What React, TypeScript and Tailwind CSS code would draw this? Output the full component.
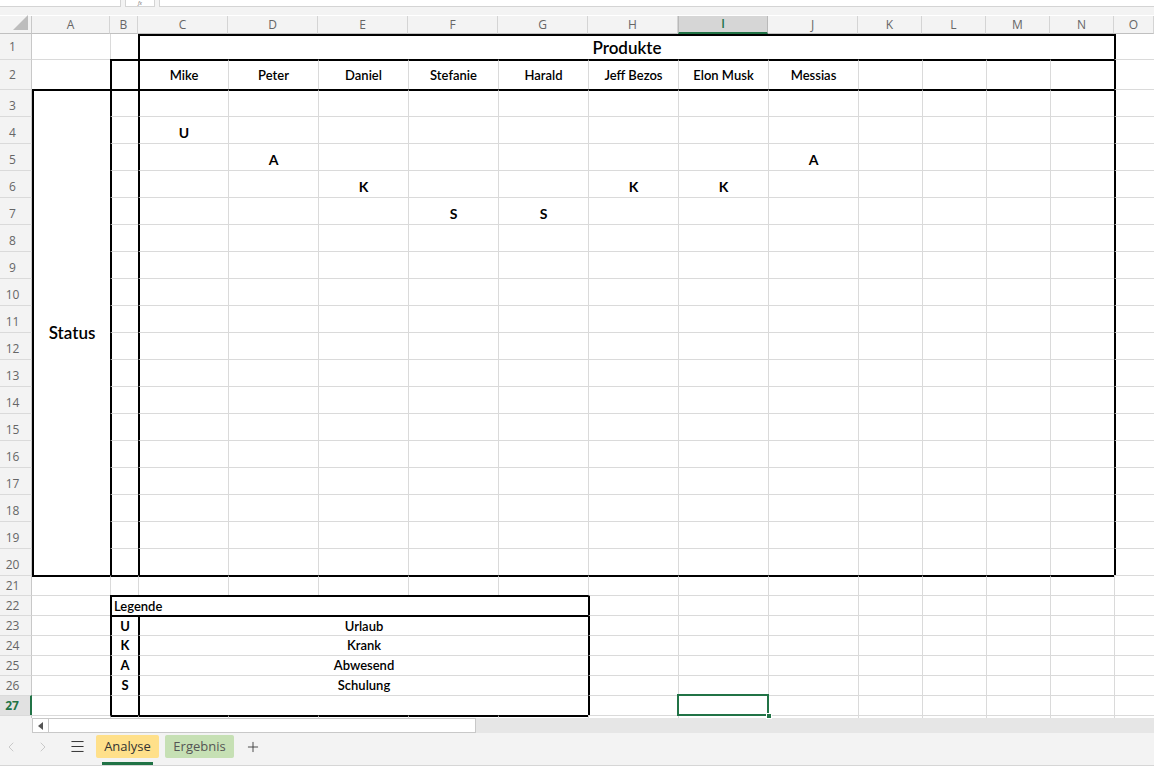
import React from 'react';
import { ChevronLeft, ChevronRight, Menu, Plus } from 'lucide-react';

type Line = 'g' | 'k' | 'n';

const COLS = ['A', 'B', 'C', 'D', 'E', 'F', 'G', 'H', 'I', 'J', 'K', 'L', 'M', 'N', 'O'];
const INNER = ['C', 'D', 'E', 'F', 'G', 'H', 'I', 'J', 'K', 'L', 'M', 'N'];
const RIGHT = ['I', 'J', 'K', 'L', 'M', 'N', 'O'];
const NAMES = ['Mike', 'Peter', 'Daniel', 'Stefanie', 'Harald', 'Jeff Bezos', 'Elon Musk', 'Messias', '', '', '', ''];
const MARKS: Record<number, Record<string, string>> = {
  4: { C: 'U' },
  5: { D: 'A', J: 'A' },
  6: { E: 'K', H: 'K', I: 'K' },
  7: { F: 'S', G: 'S' },
};
const LEGEND = [
  ['U', 'Urlaub'],
  ['K', 'Krank'],
  ['A', 'Abwesend'],
  ['S', 'Schulung'],
  ['', ''],
];
const STATUS_ROWS = Array.from({ length: 18 }, (_, i) => i + 3);

function Cell({
  t = 'g',
  l = 'g',
  className = '',
  children,
}: {
  t?: Line;
  l?: Line;
  className?: string;
  children?: React.ReactNode;
}) {
  const top = t === 'k' ? 'border-t-2 border-t-black' : t === 'g' ? 'border-t border-t-[#dadada]' : '';
  const left = l === 'k' ? 'border-l-2 border-l-black' : l === 'g' ? 'border-l border-l-[#dadada]' : '';
  return <div className={`flex min-w-0 items-center bg-white ${top} ${left} ${className}`}>{children}</div>;
}

function RowHead({
  n,
  active = false,
  first = false,
  tall = false,
}: {
  n?: number;
  active?: boolean;
  first?: boolean;
  tall?: boolean;
}) {
  return (
    <div
      className={`flex items-center justify-center pr-[6px] text-[12px] ${tall ? 'pt-[6px]' : ''} ${
        first ? '' : 'border-t border-t-[#dadada]'
      } ${
        active
          ? 'border-r-2 border-r-[#217346] bg-[#e1e1e1] font-bold text-[#217346]'
          : 'border-r border-r-[#c8c8c8] bg-[#f3f3f3] text-[#666]'
      }`}
    >
      {n}
    </div>
  );
}

function ColHead({ c }: { c: string }) {
  const active = c === 'I';
  return (
    <div
      className={`mt-px flex items-center justify-center text-[12px] ${
        active
          ? 'border-b-2 border-b-[#217346] border-x border-x-[#b9b9b9] bg-[#d6d6d6] font-semibold text-[#217346]'
          : 'border-b border-b-[#c0c0c0] border-r border-r-[#d4d4d4] bg-[#f3f3f3] text-[#666]'
      }`}
    >
      {c}
    </div>
  );
}

export default function App() {
  return (
    <div className="h-[774px] w-[1154px] overflow-hidden bg-white font-['Lato',sans-serif] text-black">
      {/* formula bar edge */}
      <div className="h-[15px] bg-[#f3f3f3]">
        <div className="flex h-[7px] gap-[4px]">
          <div className="w-[121px] border-b border-r border-[#d4d4d4] bg-white" />
          <div className="flex w-[30px] items-center justify-center border-x border-b border-[#d4d4d4] bg-white font-['Open_Sans',sans-serif] text-[5px] italic leading-[5px] text-[#666]">
            fx
          </div>
          <div className="flex-1 border-b border-l border-[#d4d4d4] bg-white" />
        </div>
      </div>

      <div className="grid grid-cols-[32px_78px_28px_repeat(8,90px)_repeat(4,64px)_1fr] grid-rows-[19px_25px_30px_repeat(18,27px)_repeat(7,20px)_3px] font-['Open_Sans',sans-serif]">
        {/* column headers */}
        <div className="mt-px flex items-end justify-end border-b border-r border-b-[#c0c0c0] border-r-[#c8c8c8] bg-[#f3f3f3] pb-[2px] pr-[2px]">
          <svg width="16" height="16" viewBox="0 0 16 16">
            <polygon points="0,15 15,15 15,0" fill="#bdbdbd" />
          </svg>
        </div>
        {COLS.map((c) => (
          <ColHead key={c} c={c} />
        ))}

        {/* row 1 */}
        <RowHead n={1} first />
        <Cell t="n" l="n" />
        <Cell t="n" />
        <Cell t="k" l="k" className="col-span-12 justify-center pt-[1px] font-['Lato',sans-serif] text-[17px] font-semibold">
          Produkte
        </Cell>
        <Cell t="n" l="k" />

        {/* row 2 */}
        <RowHead n={2} />
        <Cell l="n" />
        <Cell t="k" l="k" />
        {INNER.map((c, i) => (
          <Cell
            key={c}
            t="k"
            l={i === 0 ? 'k' : 'g'}
            className="justify-center pt-[1px] font-['Lato',sans-serif] text-[13px] font-semibold"
          >
            {NAMES[i]}
          </Cell>
        ))}
        <Cell l="k" />

        {/* rows 3 - 20 */}
        {STATUS_ROWS.map((r) => (
          <React.Fragment key={r}>
            <RowHead n={r} tall />
            {r === 3 && (
              <Cell t="k" l="k" className="row-span-18 justify-center font-['Lato',sans-serif] text-[17px] font-semibold">
                Status
              </Cell>
            )}
            <Cell t={r === 3 ? 'k' : 'g'} l="k" />
            {INNER.map((c, i) => (
              <Cell
                key={c}
                t={r === 3 ? 'k' : 'g'}
                l={i === 0 ? 'k' : 'g'}
                className="justify-center pt-[5px] font-['Lato',sans-serif] text-[14px] font-bold"
              >
                {MARKS[r]?.[c] ?? ''}
              </Cell>
            ))}
            <Cell l="k" />
          </React.Fragment>
        ))}

        {/* row 21 */}
        <RowHead n={21} />
        <Cell t="k" l="n" />
        <Cell t="k" />
        {INNER.map((c) => (
          <Cell key={c} t="k" />
        ))}
        <Cell />

        {/* row 22 */}
        <RowHead n={22} />
        <Cell l="n" />
        <Cell t="k" l="k" className="col-span-6 pl-[2px] pt-[1px] font-['Lato',sans-serif] text-[13px] font-semibold">
          Legende
        </Cell>
        <Cell l="k" />
        {RIGHT.map((c) => (
          <Cell key={c} />
        ))}

        {/* rows 23 - 27 */}
        {LEGEND.map(([k, label], i) => {
          const r = 23 + i;
          return (
            <React.Fragment key={r}>
              <RowHead n={r} active={r === 27} />
              <Cell l="n" />
              <Cell
                t={i === 0 ? 'k' : 'g'}
                l="k"
                className="justify-center pt-[1px] font-['Lato',sans-serif] text-[13px] font-bold"
              >
                {k}
              </Cell>
              <Cell
                t={i === 0 ? 'k' : 'g'}
                l="k"
                className="col-span-5 justify-center pt-[1px] font-['Lato',sans-serif] text-[13px] font-semibold"
              >
                {label}
              </Cell>
              <Cell l="k" />
              {RIGHT.map((c) =>
                r === 27 && c === 'I' ? (
                  <Cell key={c} className="relative">
                    <div className="absolute -bottom-px -left-[2px] -right-[1px] -top-[2px] z-10 border-2 border-[#217346]" />
                    <div className="absolute -bottom-[4px] -right-[4px] z-20 h-[6px] w-[6px] border border-white bg-[#217346]" />
                  </Cell>
                ) : (
                  <Cell key={c} />
                )
              )}
            </React.Fragment>
          );
        })}

        {/* row 28 (cut off) */}
        <RowHead />
        <Cell l="n" />
        {['B', 'C', 'D', 'E', 'F', 'G'].map((c) => (
          <Cell key={c} t="k" />
        ))}
        <Cell />
        {RIGHT.map((c) => (
          <Cell key={c} />
        ))}
      </div>

      {/* horizontal scrollbar */}
      <div className="flex h-[15px] bg-[#f3f3f3]">
        <div className="w-[32px]" />
        <div className="flex w-[17px] items-center justify-center border border-[#c8c8c8] bg-white">
          <svg width="6" height="8" viewBox="0 0 6 8">
            <polygon points="5,0 5,8 0,4" fill="#555" />
          </svg>
        </div>
        <div className="w-[427px] border-y border-r border-[#c8c8c8] bg-white" />
        <div className="flex-1 bg-[#e6e6e6]" />
      </div>

      {/* sheet tabs */}
      <div className="flex h-[33px] items-start border-b border-[#d6d6d6] bg-[#f3f3f3] pt-[2px] font-['Open_Sans',sans-serif]">
        <div className="flex h-[23px] items-center">
          <ChevronLeft size={16} strokeWidth={1.3} className="ml-[3px] text-[#c2c2c2]" />
          <ChevronRight size={16} strokeWidth={1.3} className="ml-[16px] text-[#c2c2c2]" />
          <Menu size={17} strokeWidth={1.4} className="ml-[18px] text-[#333]" />
        </div>
        <div className="ml-[10px] flex flex-col items-center">
          <div className="flex h-[23px] w-[63px] items-center justify-center rounded-[2px] bg-[#ffe08a] text-[13px] text-[#333]">
            Analyse
          </div>
          <div className="mt-[4px] h-[3px] w-[51px] bg-[#217346]" />
        </div>
        <div className="ml-[6px] flex h-[23px] w-[69px] items-center justify-center rounded-[2px] bg-[#c6e0b4] text-[13px] text-[#555]">
          Ergebnis
        </div>
        <div className="flex h-[23px] items-center">
          <Plus size={16} strokeWidth={1.3} className="ml-[11px] text-[#333]" />
        </div>
      </div>
    </div>
  );
}
